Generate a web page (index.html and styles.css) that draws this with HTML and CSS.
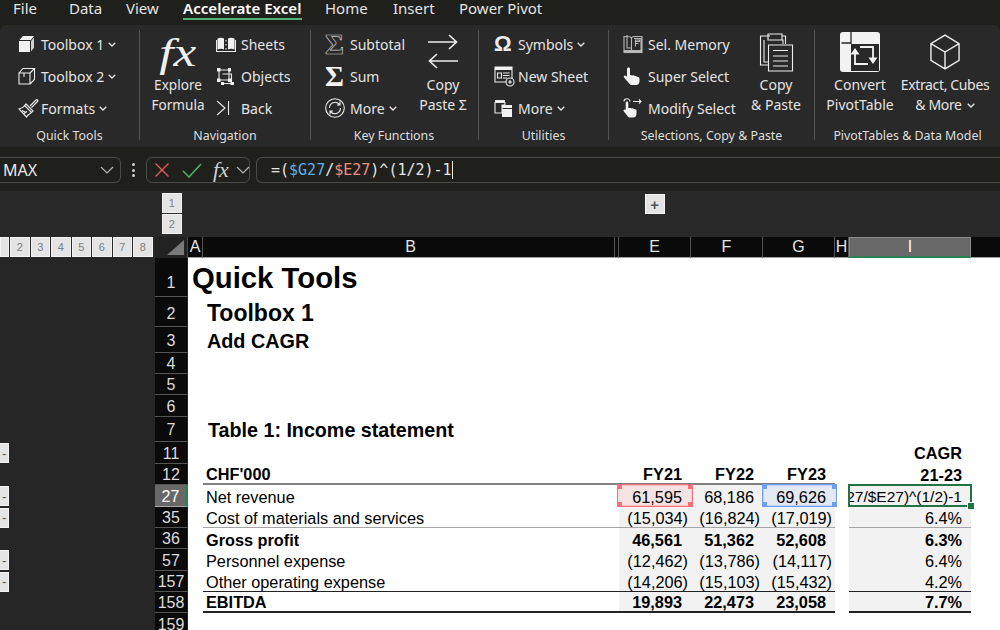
FILE: index.html
```html
<!DOCTYPE html>
<html lang="en">
<head>
<meta charset="utf-8">
<title>Accelerate Excel</title>
<link rel="stylesheet" href="styles.css">
</head>
<body>
<nav class="tabs">
  <span class="tab t1">File</span><span class="tab t2">Data</span><span class="tab t3">View</span>
  <span class="tab t4 active">Accelerate Excel</span><span class="tab t5">Home</span><span class="tab t6">Insert</span><span class="tab t7">Power Pivot</span>
</nav>

<section class="ribbon">
  <div class="group g1">
    <div class="gbody">
      <div class="stack">
        <div class="item"><span class="ib"><svg class="ic" width="18" height="18" viewBox="0 0 18 18"><path class="solid" d="M1 6h11v11H1z"/><path class="solid" d="M1.500 5 5 1h11l-3.200 4z"/><path class="soft" d="M13 6l3-3.600v10.400L13 16.600z"/></svg></span>Toolbox 1<svg class="chev" width="8" height="5" viewBox="0 0 8 5"><path d="M.7.7 4 4 7.300.7"/></svg></div>
        <div class="item"><span class="ib"><svg class="ic" width="18" height="18" viewBox="0 0 18 18"><path d="M1 6h11v11H1zM1 6l4-4.500h11.500L12 6M12 17l4.500-4.500V1.500M6 6v4"/></svg></span>Toolbox 2<svg class="chev" width="8" height="5" viewBox="0 0 8 5"><path d="M.7.7 4 4 7.300.7"/></svg></div>
        <div class="item"><span class="ib"><svg class="ic" width="21" height="20" viewBox="0 0 21 20"><path d="M12 8l6-6c1-1 2.500.5 1.500 1.500l-6 6"/><path d="M8 6l7 7-1.500 1.500-7-7z"/><path d="M7 7.500C5.500 9.500 3 10.500 1 11l7.500 8c1-2 3.500-3.500 5-4.500M4 12.500l4 2M6 15.500l3-2"/></svg></span>Formats<svg class="chev" width="8" height="5" viewBox="0 0 8 5"><path d="M.7.7 4 4 7.300.7"/></svg></div>
      </div>
    </div>
    <div class="glabel">Quick Tools</div>
  </div>
  <div class="sep"></div>
  <div class="group g2">
    <div class="gbody">
      <div class="big w52">
        <span class="bigicon"><span class="fxbig">fx</span></span>
        <span class="bigtext">Explore<br>Formula</span>
      </div>
      <div class="stack s2">
        <div class="item"><span class="ib"><svg class="ic" width="20" height="16" viewBox="0 0 20 16"><path class="solid" d="M1.500 2.500C4 1.500 6 1.500 8 2.500v11c-2-1-4-1-6.500 0zM12 2.500c2-1 4-1 6.500 0v11c-2.500-1-4.500-1-6.500 0z"/><path d="M.5 4v11.500h19V4M10 4v1.500M10 8v1.500M10 12v1.500"/></svg></span>Sheets</div>
        <div class="item"><span class="ib"><svg class="ic" width="18" height="18" viewBox="0 0 18 18"><path d="M3 3h10v10H3zM6.500 7h9v9.500h-9"/><path class="solid" d="M1 1h3.500v3.500H1zM12 1h3v3.500h-3zM1 11.500h3.500V15H1zM12 11.500h3.500V15H12zM5 15h3v3H5zM14.500 15H18v3h-3.500z"/></svg></span>Objects</div>
        <div class="item"><span class="ib"><svg class="ic" width="14" height="16" viewBox="0 0 14 16"><path d="M1 1l8 7-8 7M12.500 1v14"/></svg></span>Back</div>
      </div>
    </div>
    <div class="glabel">Navigation</div>
  </div>
  <div class="sep"></div>
  <div class="group g3">
    <div class="gbody">
      <div class="stack s3">
        <div class="item"><span class="ib"><span class="sigma outline">Σ</span></span>Subtotal</div>
        <div class="item"><span class="ib"><span class="sigma">Σ</span></span>Sum</div>
        <div class="item"><span class="ib"><svg class="ic" width="20" height="20" viewBox="0 0 20 20"><circle cx="10" cy="10" r="9.300"/><path d="M4.500 10c0-5 6-7.500 9.500-4l1 1M15.500 10c0 5-6 7.500-9.500 4l-1-1M15 3.500V7h-3M5 16.500V13h3"/></svg></span>More<svg class="chev" width="8" height="5" viewBox="0 0 8 5"><path d="M.7.7 4 4 7.300.7"/></svg></div>
      </div>
      <div class="big w60">
        <span class="bigicon"><svg class="ic wide" width="30" height="36" viewBox="0 0 30 36"><path d="M0 8h28.500M21 1l7.500 7-7.500 7M30 27H1.500M9 20l-7.500 7 7.500 7"/></svg></span>
        <span class="bigtext">Copy<br>Paste Σ</span>
      </div>
    </div>
    <div class="glabel">Key Functions</div>
  </div>
  <div class="sep"></div>
  <div class="group g4">
    <div class="gbody">
      <div class="stack">
        <div class="item"><span class="ib"><span class="omega">Ω</span></span>Symbols<svg class="chev" width="8" height="5" viewBox="0 0 8 5"><path d="M.7.7 4 4 7.300.7"/></svg></div>
        <div class="item"><span class="ib"><svg class="ic" width="21" height="21" viewBox="0 0 21 21"><path d="M1 1h17v15H1z"/><path class="solid" d="M1 1h17v3H1z"/><path d="M3.500 7h4v5h-4zM9 7h6.500M9 9.500h6.500M9 12h4"/><circle class="dark" cx="16" cy="16" r="4"/><path d="M16 14v4M14 16h4"/></svg></span>New Sheet</div>
        <div class="item"><span class="ib"><svg class="ic" width="19" height="19" viewBox="0 0 19 19"><path class="solid" d="M1 1h10v2.500H1zM8 6h10v3H8z"/><path d="M1 3.500h10V6H8v8H1z"/><path class="solid" d="M8 10h10v8H8z"/></svg></span>More<svg class="chev" width="8" height="5" viewBox="0 0 8 5"><path d="M.7.7 4 4 7.300.7"/></svg></div>
      </div>
    </div>
    <div class="glabel">Utilities</div>
  </div>
  <div class="sep"></div>
  <div class="group g5">
    <div class="gbody">
      <div class="stack s5">
        <div class="item"><span class="ib"><svg class="ic mute" width="20" height="20" viewBox="0 0 20 20"><path d="M1 2.500h3.500c2 0 3.500.5 4 1.500.5-1 1-1.500 2.500-1.500h8v14H1zM4 1v13h4M8.500 4v12M11 4.500h7v12M12.500 6h4v1.500h-4zM12.500 7.500v5M12.500 9.500h3"/><path d="M1 17.500h18v1H1z"/></svg></span>Sel. Memory</div>
        <div class="item"><span class="ib"><svg class="ic hand" width="18" height="20" viewBox="0 0 18 20"><path class="solid" d="M5.500 1.500c1 0 1.500.7 1.500 1.500v6l1.500.2 1 .3c1.200-.5 2 0 2.300.6 1-.4 1.800 0 2.200.8 1.200-.3 2.500.6 2.500 2.100v2c0 2.500-1.500 4-3.500 4H9.500c-1.500 0-2.500-.5-3.500-1.800L1 11.500c-.7-1.200.5-2.500 1.800-1.700L4 10.700V3c0-.8.600-1.500 1.500-1.500z"/></svg></span>Super Select</div>
        <div class="item"><span class="ib"><svg class="ic hand" width="20" height="20" viewBox="0 0 20 20"><path d="M1 3.500C1 1.500 2.500.8 4 .8S7 2 7 3.500M10 3.500h8M16 1.500l2 2-2 2"/><path class="solid" d="M4 3.500c.8 0 1.300.5 1.300 1.300V10l1.700.1c.8-.4 1.500 0 1.900.4.900-.4 1.600 0 2 .5 1.200-.4 2.600.4 2.600 1.800V16c0 2.200-1.500 3.500-3.300 3.500H7.500c-1.200 0-2.200-.5-3-1.500L.7 13.200c-.7-1 .5-2.300 1.600-1.500l.4.300V4.800c0-.8.500-1.300 1.300-1.300z"/></svg></span>Modify Select</div>
      </div>
      <div class="big w56">
        <span class="bigicon"><svg class="ic" width="36" height="40" viewBox="0 0 36 40"><path d="M12 4H2.500v29H10M24 4h3.500v8M6 8v22h4M24 8h1v4"/><path d="M10 2h14v6H10z"/><path d="M10.500 13h24v26h-24z"/><path d="M15 18.500h15M15 24h15M15 29h15M15 34h15"/></svg></span>
        <span class="bigtext">Copy<br>&amp; Paste</span>
      </div>
    </div>
    <div class="glabel">Selections, Copy &amp; Paste</div>
  </div>
  <div class="sep"></div>
  <div class="group g6">
    <div class="gbody">
      <div class="big w70">
        <span class="bigicon"><svg class="ic" width="40" height="40" viewBox="0 0 40 40"><rect class="solid" width="40" height="40" rx="3"/><path class="darkfill" d="M11 12h28v27H11z"/><path class="darkline" d="M11 0v12M1.500 11H11"/><path class="arrows" d="M15 22v10h13M20 15h13v11"/><path class="solid" d="M15 16l4.500 6.500h-9zM33 32l-4.500-6.500h9z"/></svg></span>
        <span class="bigtext">Convert<br>PivotTable</span>
      </div>
      <div class="big w100">
        <span class="bigicon"><svg class="ic cube" width="30" height="36" viewBox="0 0 32 38"><path d="M16 1l15 9v18L16 37 1 28V10zM1 10l15 9 15-9M16 19v18"/></svg></span>
        <span class="bigtext tight">Extract, Cubes<br>&amp; More<svg class="chev" width="8" height="5" viewBox="0 0 8 5"><path d="M.7.7 4 4 7.300.7"/></svg></span>
      </div>
    </div>
    <div class="glabel">PivotTables &amp; Data Model</div>
  </div>
</section>

<section class="fbar">
  <div class="namebox"><span>MAX</span><svg class="chev big-chev" width="14" height="8" viewBox="0 0 14 8"><path d="M1 1l6 6 6-6"/></svg></div>
  <div class="dots"><i></i><i></i><i></i></div>
  <div class="fbtns">
    <svg class="cross" width="14" height="14" viewBox="0 0 14 14"><path d="M.5.5l13 13M13.500.5l-13 13"/></svg>
    <svg class="check" width="20" height="15" viewBox="0 0 20 15"><path d="M1 8l6 6L19 1"/></svg>
    <span class="fxsmall">fx</span>
    <svg class="chev big-chev" width="14" height="8" viewBox="0 0 14 8"><path d="M1 1l6 6 6-6"/></svg>
  </div>
  <div class="finput">=(<span class="ref-b">$G27</span>/<span class="ref-r">$E27</span>)^(1/2)-1<span class="caret"></span></div>
</section>

<section class="outline-bar">
  <div class="lv-col"><span class="lv">1</span><span class="lv">2</span></div>
  <span class="lv plus">+</span>
</section>

<main class="sheet">
  <div class="row rh">
    <div class="gutter levels"><span class="lv cut"></span><span class="lv">2</span><span class="lv">3</span><span class="lv">4</span><span class="lv">5</span><span class="lv">6</span><span class="lv">7</span><span class="lv">8</span></div>
    <div class="corner"><svg width="17" height="15" viewBox="0 0 17 15"><path d="M17 0v15H0z"/></svg></div>
    <div class="ch">A</div><div class="ch chb">B</div><div class="ch">E</div><div class="ch">F</div><div class="ch">G</div><div class="ch">H</div><div class="ch csel">I</div><div class="ch noline"></div>
  </div>

  <div class="row h39"><div class="gutter"></div><div class="rn low1">1</div><div class="t title span-ab">Quick Tools</div></div>
  <div class="row h30"><div class="gutter"></div><div class="rn low">2</div><div class="t sub1 span-b">Toolbox 1</div></div>
  <div class="row h26"><div class="gutter"></div><div class="rn">3</div><div class="t sub2 span-b">Add CAGR</div></div>
  <div class="row h21"><div class="gutter"></div><div class="rn">4</div></div>
  <div class="row h21"><div class="gutter"></div><div class="rn">5</div></div>
  <div class="row h22"><div class="gutter"></div><div class="rn">6</div></div>
  <div class="row h25"><div class="gutter"></div><div class="rn">7</div><div class="t sub3 span-b">Table 1: Income statement</div></div>

  <div class="row h22">
    <div class="gutter"><span class="minus">-</span></div><div class="rn">11</div><div class="t span-i b num">CAGR</div>
  </div>
  <div class="row h21 hdr">
    <div class="gutter"></div><div class="rn">12</div><div class="t ca"></div><div class="t lab b">CHF'000</div><div class="t num b">FY21</div><div class="t num b">FY22</div><div class="t num b">FY23</div><div class="t"></div><div class="t num b plain">21-23</div>
  </div>
  <div class="row h22 data">
    <div class="gutter"><span class="minus">-</span></div><div class="rn rnsel">27</div><div class="t ca"></div><div class="t lab">Net revenue</div>
    <div class="t num fill sel red">61,595</div><div class="t num fill">68,186</div><div class="t num fill sel blue">69,626</div><div class="t"></div>
    <div class="t fill active-cell"><div class="clip"><span class="edit">=($G27/$E27)^(1/2)-1</span></div></div>
  </div>
  <div class="row h21 data line-light">
    <div class="gutter"><span class="minus">-</span></div><div class="rn">35</div><div class="t ca"></div><div class="t lab">Cost of materials and services</div>
    <div class="t num fill par">(15,034)</div><div class="t num fill par">(16,824)</div><div class="t num fill par">(17,019)</div><div class="t gap"></div><div class="t num fill">6.4%</div>
  </div>
  <div class="row h21 data">
    <div class="gutter"></div><div class="rn">36</div><div class="t ca"></div><div class="t lab b">Gross profit</div>
    <div class="t num fill b">46,561</div><div class="t num fill b">51,362</div><div class="t num fill b">52,608</div><div class="t"></div><div class="t num fill b">6.3%</div>
  </div>
  <div class="row h22 data">
    <div class="gutter"><span class="minus">-</span></div><div class="rn">57</div><div class="t ca"></div><div class="t lab">Personnel expense</div>
    <div class="t num fill par">(12,462)</div><div class="t num fill par">(13,786)</div><div class="t num fill par">(14,117)</div><div class="t"></div><div class="t num fill">6.4%</div>
  </div>
  <div class="row h21 data line-dark">
    <div class="gutter"><span class="minus">-</span></div><div class="rn">157</div><div class="t ca"></div><div class="t lab">Other operating expense</div>
    <div class="t num fill par">(14,206)</div><div class="t num fill par">(15,103)</div><div class="t num fill par">(15,432)</div><div class="t gap"></div><div class="t num fill">4.2%</div>
  </div>
  <div class="row h21 data line-total">
    <div class="gutter"></div><div class="rn">158</div><div class="t ca"></div><div class="t lab b">EBITDA</div>
    <div class="t num fill b">19,893</div><div class="t num fill b">22,473</div><div class="t num fill b">23,058</div><div class="t gap"></div><div class="t num fill b">7.7%</div>
  </div>
  <div class="row h22"><div class="gutter"></div><div class="rn">159</div></div>
</main>
</body>
</html>
```

FILE: styles.css
```css
* { box-sizing: border-box; }
html, body { margin: 0; width: 1000px; height: 630px; overflow: hidden; }
body { background: #1f1f1c; color: #e6e6e6; font-family: "Noto Sans", "Open Sans", sans-serif; }

/* tabs */
.tabs { display: grid; grid-template-columns: 56px 57px 57px 142px 68px 66px 100px; height: 25px; padding-left: 13px; }
.tab { font-size: 15px; line-height: 17px; white-space: nowrap; color: #e4e4e4; }
.tab.active { position: relative; font-weight: 600; color: #fff; font-size: 15.100px; }
.tab.active::after { content: ""; position: absolute; left: 0; top: 18px; width: 119px; height: 2px; background: #4cb27a; }

/* ribbon */
.ribbon { display: flex; height: 122px; background: #292929; border-radius: 6px 6px 0 0; }
.group { display: flex; flex-direction: column; flex: none; }
.gbody { display: flex; height: 100px; padding-top: 4px; }
.glabel { text-align: center; font-size: 12.400px; line-height: 16px; padding-top: 3px; color: #dedede; white-space: nowrap; }
.sep { flex: none; width: 1px; margin: 5px 0 7px; background: #525252; }
.g1 { width: 139px; }
.g2 { width: 170px; }
.g3 { width: 167px; }
.g4 { width: 129px; }
.g5 { width: 205px; }
.g6 { width: 185px; }
.g1 .gbody { padding-left: 16px; }
.g2 .gbody { padding-left: 12px; }
.g3 .gbody { padding-left: 13px; }
.g4 .gbody { padding-left: 14px; }
.g5 .gbody { padding-left: 13px; }
.g6 .gbody { padding-left: 10px; }
.g3 .glabel { padding-right: 1px; }
.stack { display: flex; flex-direction: column; flex: none; margin-top: -1px; }
.s2 { margin-left: 10px; }
.s3 { width: 89px; }
.s5 { width: 126px; }
.item { display: flex; align-items: center; height: 32px; flex: none; font-size: 14px; white-space: nowrap; color: #e4e4e4; }
.ib { display: flex; align-items: center; justify-content: flex-start; width: 25px; flex: none; padding-left: 1px; }
.g1 .ib { padding-left: 2px; }
.g2 .ib { padding-left: 2px; width: 27px; }
.g3 .ib, .g5 .ib { width: 26px; }
.big { display: flex; flex-direction: column; align-items: center; flex: none; text-align: center; }
.w52 { width: 52px; }
.w60 { width: 60px; }
.w56 { width: 56px; }
.w70 { width: 70px; }
.w100 { width: 100px; }
.bigicon { display: flex; align-items: center; justify-content: center; height: 46px; flex: none; }
.bigtext { font-size: 14px; line-height: 20px; white-space: nowrap; color: #e4e4e4; }
.g2 .bigtext { font-size: 13.600px; }
.bigtext.tight { letter-spacing: -.35px; }
.fxbig { font-family: "Liberation Serif", serif; font-style: italic; font-size: 41px; line-height: 40px; transform: scaleX(1.250); color: #f0f0f0; }

/* icons */
.ic { display: block; fill: none; stroke: #ececec; stroke-width: 1.100; flex: none; }
.ic .solid, .ic.hand .solid { fill: #f2f2f2; stroke: none; }
.ic .soft { fill: #cfcfcf; stroke: none; }
.ic .dark { fill: #292929; }
.ic .darkfill { fill: #292929; stroke: none; }
.ic .darkline { stroke: #292929; stroke-width: 1.300; }
.ic .arrows { stroke: #f2f2f2; stroke-width: 1.800; }
.ic.mute { stroke: #b9b9b9; }
.ic.cube { stroke-width: 1.500; }
.ic.wide { stroke-width: 1.700; }
.chev { fill: none; stroke: #e4e4e4; stroke-width: 1.300; margin-left: 4px; flex: none; }
.bigtext .chev { vertical-align: 2px; margin-left: 5px; }
.sigma { font-family: "Liberation Serif", serif; font-weight: 700; font-size: 29px; line-height: 24px; color: #f4f4f4; }
.sigma.outline { color: transparent; -webkit-text-stroke: 0.7px #c8c8c8; }
.omega { font-family: "Liberation Sans", sans-serif; font-weight: 700; font-size: 22px; line-height: 20px; color: #ececec; }

/* formula bar */
.fbar { display: flex; height: 44px; padding-top: 10px; align-items: flex-start; }
.namebox { display: flex; align-items: center; justify-content: space-between; width: 121px; height: 26px; padding: 0 6px 0 3px; border: 1px solid #4a4a48; border-left: 0; border-radius: 0 6px 6px 0; font-size: 16px; color: #e8e8e8; }
.big-chev { stroke: #b5b5b5; stroke-width: 1.200; margin: 0; }
.dots { display: flex; flex-direction: column; justify-content: center; gap: 2.500px; width: 25px; height: 26px; align-items: center; }
.dots i { display: block; width: 3px; height: 3px; background: #d0d0d0; border-radius: 50%; }
.fbtns { display: flex; align-items: center; width: 104px; height: 26px; padding-left: 8px; border: 1px solid #4a4a48; border-radius: 6px; }
.cross { fill: none; stroke: #e35d5d; stroke-width: 1.300; margin-right: 13px; flex: none; }
.check { fill: none; stroke: #4eb56c; stroke-width: 1.500; margin-right: 11px; flex: none; }
.fxsmall { font-family: "Liberation Serif", serif; font-style: italic; font-size: 22px; line-height: 24px; color: #cfcfcf; margin-right: 7px; }
.finput { display: flex; flex: 1; height: 26px; margin-left: 6px; padding-left: 14px; align-items: center; border: 1px solid #4a4a48; border-right: 0; border-radius: 6px 0 0 6px; font-family: "DejaVu Sans Mono", monospace; font-size: 15px; color: #e6e6e6; white-space: pre; }
.ref-b { color: #5ab0ee; }
.ref-r { color: #ee8e7c; }
.caret { display: inline-block; width: 1px; height: 18px; background: #e6e6e6; }

/* outline */
.outline-bar { display: flex; height: 46px; padding: 2px 0 0 162px; background: #292929; align-items: flex-start; }
.lv-col { display: flex; flex-direction: column; gap: 1px; width: 20px; }
.lv { display: flex; align-items: center; justify-content: center; flex: none; width: 19.500px; height: 20px; background: #e4e4e4; border: 1.500px solid #f4f4f4; color: #7d7d7d; font-family: "Liberation Sans", sans-serif; font-size: 11px; }
.plus { margin-left: 463px; margin-top: 1px; font-size: 15px; font-weight: 700; color: #555; }

/* sheet */
.sheet { display: flex; flex-direction: column; background: #fff; font-family: "Liberation Sans", Arial, sans-serif; font-size: 16.300px; color: #000; }
.row { display: grid; grid-template-columns: 155px 33px 15px 416px 72px 72px 72px 14px 122px 29px; flex: none; }
.rh { height: 21px; }
.h39 { height: 39px; }
.h30 { height: 30px; }
.h26 { height: 26px; }
.h25 { height: 25px; }
.h22 { height: 22px; }
.h21 { height: 21px; }
.gutter { background: #262626; display: flex; align-items: center; overflow: hidden; }
.levels { gap: 1px; align-items: flex-start; }
.lv.cut { width: 9px; }
.minus { display: flex; align-items: center; width: 9px; height: 20px; padding-left: 2px; background: #e4e4e4; border: 1px solid #f4f4f4; border-left: 0; color: #555; font-size: 13px; }
.corner { display: flex; justify-content: flex-end; align-items: flex-end; padding: 0 3px 3px 0; background: #222; border-right: 1px solid #444; }
.corner svg { display: block; fill: #7a7a7a; }
.ch { display: flex; align-items: center; justify-content: center; background: #0a0a0a; color: #e4e4e4; border-right: 1px solid #555; border-bottom: 1px solid #a0a0a0; font-size: 16px; }
.chb { box-shadow: inset -3px 0 0 #0a0a0a, inset -4px 0 0 #555; }
.csel { background: #686868; color: #fff; border: 1px solid #8a8a8a; border-bottom: 2px solid #2b8052; }
.noline { border-right: 0; }
.rn { display: flex; align-items: center; justify-content: center; padding-top: 2px; line-height: 18px; background: #0a0a0a; color: #dcdcdc; border-bottom: 1px solid #555; border-right: 1px solid #222; font-size: 16px; overflow: hidden; }
.rn.low { align-items: flex-end; padding: 0 0 3px; }
.rn.low1 { align-items: flex-end; padding: 0 0 4px; }
.rnsel { background: #686868; color: #fff; border-right: 2px solid #2b8052; border-bottom: 1px solid #a8a8a8; }
.t { display: flex; align-items: center; padding-top: 2px; white-space: nowrap; min-width: 0; }
.data .t, .hdr .t { line-height: 18px; }
.b { font-weight: 700; }
.title { font-size: 29.300px; font-weight: 700; padding: 0 0 0 4px; }
.sub1 { font-size: 23px; font-weight: 700; padding-left: 4px; }
.sub2 { font-size: 19.800px; font-weight: 700; padding-left: 4px; }
.sub3 { font-size: 19.700px; font-weight: 700; padding-left: 5px; }
.span-ab { grid-column: 3 / 5; }
.span-b { grid-column: 4 / 5; }
.span-i { grid-column: 9 / 10; padding-top: 0; }
.lab { padding-left: 3px; }
.num { justify-content: flex-end; padding-right: 9px; }
.num.par { padding-right: 3px; }
.fill { background: #f2f2f2; }
.hdr .t { padding-top: 0; }
.hdr .lab, .hdr .num:not(.plain) { border-bottom: 2px solid #808080; }
.line-light .lab, .line-light .num { border-bottom: 1px solid #a6a6a6; }
.line-dark .lab, .line-dark .num { border-bottom: 1px solid #222; }
.line-total .t { padding-top: 1px; }
.line-total .lab, .line-total .num { border-bottom: 2px solid #222; }
.sel { position: relative; }
.sel::after { content: ""; position: absolute; top: -1px; bottom: 0; left: -2px; right: -2px; border: 1px solid var(--c); box-shadow: inset 0 0 0 1px var(--c2);
  background:
    linear-gradient(var(--c), var(--c)) -1px -1px / 5px 5px no-repeat,
    linear-gradient(var(--c), var(--c)) calc(100% + 1px) -1px / 5px 5px no-repeat,
    linear-gradient(var(--c), var(--c)) -1px calc(100% + 1px) / 5px 5px no-repeat,
    linear-gradient(var(--c), var(--c)) calc(100% + 1px) calc(100% + 1px) / 5px 5px no-repeat;
  background-clip: border-box; }
.red { background: #f5e3e3; --c: #fa6f79; --c2: rgba(250, 111, 121, .3); }
.blue { background: #e3e8f3; --c: #6c9ff5; --c2: rgba(108, 159, 245, .3); }
.blue::after { left: -1px; }
.active-cell { position: relative; }
.active-cell::after { content: ""; position: absolute; top: -1px; bottom: 0; left: -1px; right: -1px; border: 2px solid #217346; }
.active-cell::before { content: ""; position: absolute; right: -3px; bottom: -2px; z-index: 1; width: 6px; height: 6px; background: #217346; border: 1px solid #fff; border-width: 1px 0 0 1px; }
.clip { display: flex; justify-content: flex-end; width: 100%; padding-right: 9px; overflow: hidden; }
.edit { flex: none; font-size: 15.500px; }
```
